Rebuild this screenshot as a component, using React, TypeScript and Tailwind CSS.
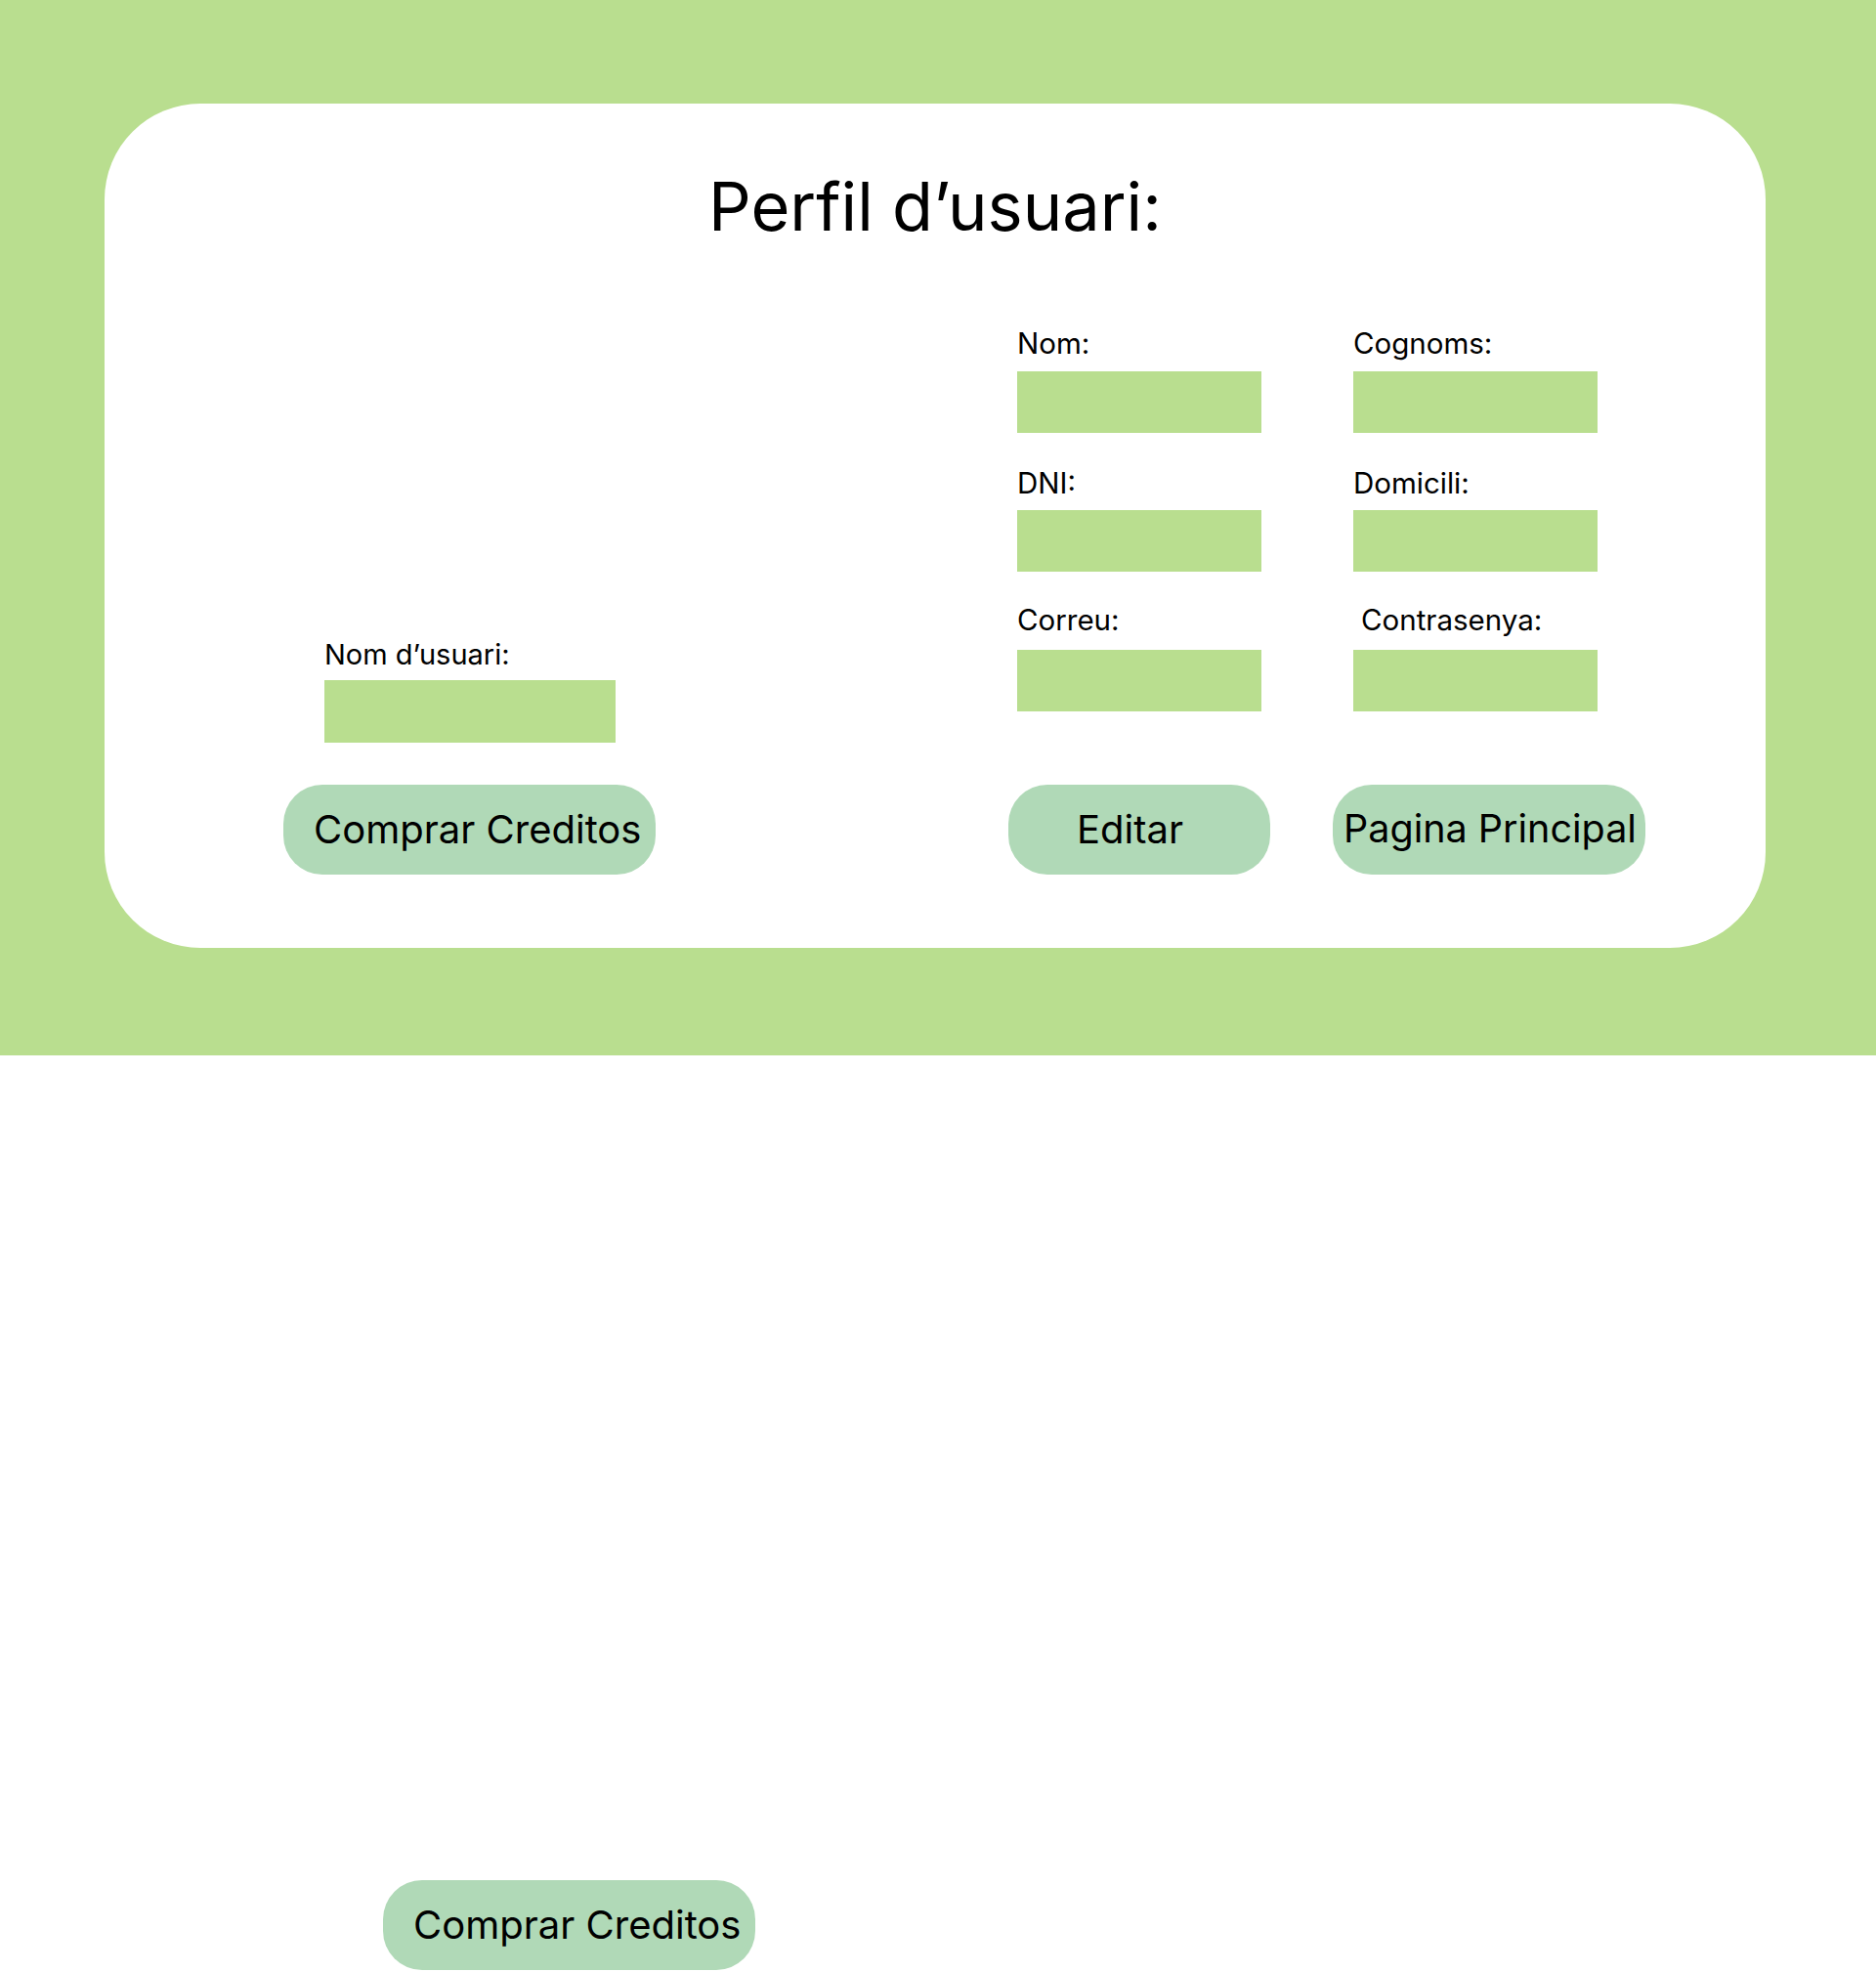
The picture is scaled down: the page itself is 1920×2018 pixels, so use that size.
export default function App() {
  return (
    <div className="min-h-[2018px] bg-white font-['Inter',sans-serif] text-black">
      <section className="h-[1080px] bg-[#b9de8f] pl-[107px] pt-[106px]">
        <div className="h-[864px] w-[1700px] rounded-[98px] bg-white pt-[71px]">
          <h1 className="text-center text-[68.5px] font-normal leading-[70px]">Perfil d’usuari:</h1>

          <div className="mt-[90px] flex items-end">
            {/* left column */}
            <div className="ml-[183px] flex w-[380px] flex-col">
              <label className="ml-[42px] text-[29px] leading-[28px]">Nom d’usuari:</label>
              <div className="ml-[42px] mt-[12px] h-[64px] w-[298px] bg-[#b9de8f]" />
              <button className="mt-[43px] flex h-[92px] w-[381px] items-center rounded-[40px] bg-[#b0d9b7] pl-[31px] text-[40px] leading-none">
                Comprar Creditos
              </button>
            </div>

            {/* right column */}
            <div className="ml-[362px] flex flex-col">
              <div className="grid grid-cols-[250px_250px] gap-x-[94px] pl-[9px]">
                <div className="flex flex-col">
                  <label className="text-[29.5px] leading-[28px]">Nom:</label>
                  <div className="mt-[15px] h-[63px] bg-[#b9de8f]" />
                </div>
                <div className="flex flex-col">
                  <label className="text-[29.5px] leading-[28px]">Cognoms:</label>
                  <div className="mt-[15px] h-[63px] bg-[#b9de8f]" />
                </div>
                <div className="mt-[37px] flex flex-col">
                  <label className="text-[29.5px] leading-[28px]">DNI:</label>
                  <div className="mt-[14px] h-[63px] bg-[#b9de8f]" />
                </div>
                <div className="mt-[37px] flex flex-col">
                  <label className="text-[29.5px] leading-[28px]">Domicili:</label>
                  <div className="mt-[14px] h-[63px] bg-[#b9de8f]" />
                </div>
                <div className="mt-[35px] flex flex-col">
                  <label className="text-[29.5px] leading-[28px]">Correu:</label>
                  <div className="mt-[17px] h-[63px] bg-[#b9de8f]" />
                </div>
                <div className="mt-[35px] flex flex-col">
                  <label className="ml-[8px] text-[29.5px] leading-[28px]">Contrasenya:</label>
                  <div className="mt-[17px] h-[63px] bg-[#b9de8f]" />
                </div>
              </div>

              <div className="mt-[75px] flex">
                <button className="flex h-[92px] w-[268px] items-center rounded-[40px] bg-[#b0d9b7] pl-[70px] text-[40px] leading-none">
                  Editar
                </button>
                <button className="ml-[64px] flex h-[92px] w-[320px] items-center rounded-[40px] bg-[#b0d9b7] pl-[11px] text-[39.5px] leading-none">
                  Pagina Principal
                </button>
              </div>
            </div>
          </div>
        </div>
      </section>

      <div className="ml-[392px] mt-[844px]">
        <button className="flex h-[92px] w-[381px] items-center rounded-[40px] bg-[#b0d9b7] pl-[31px] text-[40px] leading-none">
          Comprar Creditos
        </button>
      </div>
    </div>
  );
}
